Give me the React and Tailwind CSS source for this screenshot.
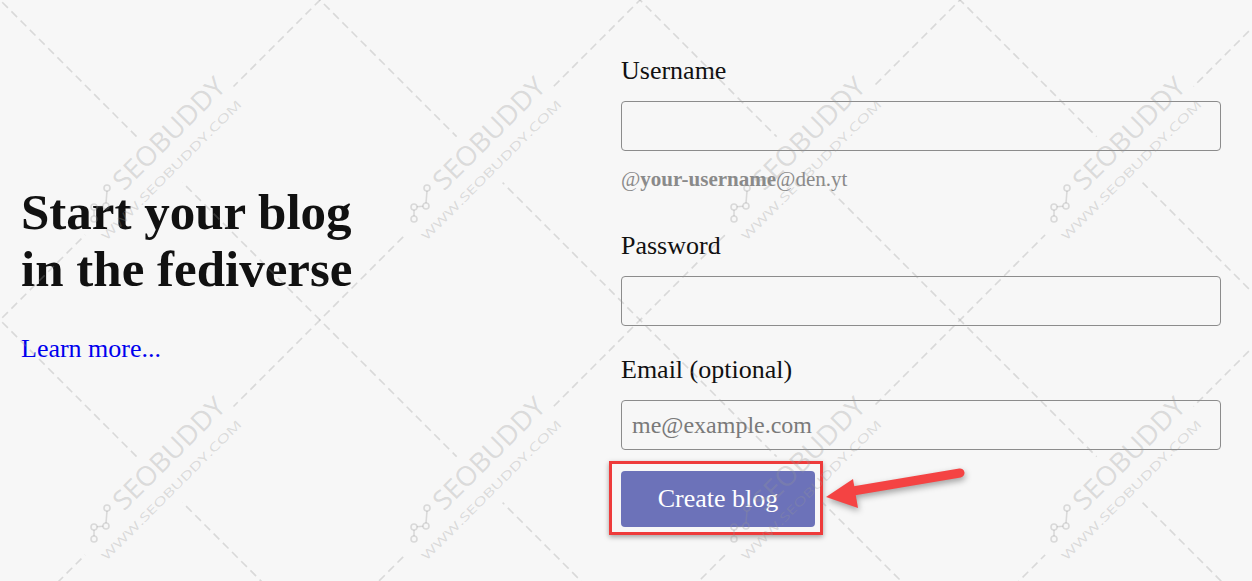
import React from "react";

const centers = [];
for (let i = 0; i < 4; i++) {
  for (let j = 0; j < 2; j++) {
    centers.push([160 + 320 * i, 160 + 320 * j]);
  }
}

function Watermark() {
  const negLines = [1, 2, 3, 4, 5];
  const posLines = [-4, -3, -2, -1, 0, 1];
  const c = "rgba(150,150,150,0.3)";
  return (
    <svg
      className="absolute inset-0 pointer-events-none"
      width="100%"
      height="100%"
    >
      <defs>
        <mask id="wm-mask">
          <rect x="-100" y="-100" width="1600" height="900" fill="white" />
          {centers.map(([cx, cy], k) => (
            <g key={k} transform={`translate(${cx} ${cy}) rotate(-45)`}>
              <rect x="-106" y="-33" width="210" height="65" fill="black" />
            </g>
          ))}
        </mask>
      </defs>
      <g
        mask="url(#wm-mask)"
        stroke={c}
        strokeWidth="1.6"
        strokeDasharray="8 5"
        fill="none"
      >
        {negLines.map((k) => (
          <line key={"n" + k} x1={-200} y1={320 * k + 200} x2={1500} y2={320 * k - 1500} />
        ))}
        {posLines.map((m) => (
          <line key={"p" + m} x1={-200} y1={-200 + 320 * m} x2={1500} y2={1500 + 320 * m} />
        ))}
      </g>
      {centers.map(([cx, cy], k) => (
        <g key={"t" + k}>
          <g transform={`translate(${cx} ${cy}) rotate(-45)`} fill={c}>
            <text
              x="-48"
              y="-3"
              fontSize="27"
              textLength="146"
              lengthAdjust="spacingAndGlyphs"
              style={{ fontFamily: "'Open Sans', sans-serif", fontWeight: 400 }}
            >
              SEOBUDDY
            </text>
            <text
              x="-95"
              y="19.5"
              fontSize="12"
              textLength="192"
              lengthAdjust="spacingAndGlyphs"
              style={{ fontFamily: "'Open Sans', sans-serif", fontWeight: 400 }}
            >
              WWW.SEOBUDDY.COM
            </text>
          </g>
          <g transform={`translate(${cx} ${cy})`} stroke={c} strokeWidth="1.6" fill="none">
            <circle cx="-53" cy="28" r="3" />
            <circle cx="-54" cy="46" r="3" />
            <circle cx="-66" cy="47" r="3" />
            <circle cx="-66" cy="59" r="3" />
            <line x1="-53" y1="31" x2="-54" y2="43" />
            <line x1="-57" y1="46.2" x2="-63" y2="46.8" />
            <line x1="-66" y1="50" x2="-66" y2="56" />
          </g>
        </g>
      ))}
    </svg>
  );
}

export default function App() {
  return (
    <div className="relative min-h-[581px] w-full overflow-hidden bg-[#f7f7f7] font-['Liberation_Serif',serif] text-[#111]">
      <div className="flex px-[21px]">
        <div className="w-[600px] pt-[184px]">
          <h1 className="text-[51px] leading-[57px] font-bold text-[#111]">
            Start your blog
            <br />
            in the fediverse
          </h1>
          <a
            href="#"
            className="mt-[36px] block text-[26px] leading-[30px] text-[#0000ee]"
          >
            Learn more...
          </a>
        </div>
        <form className="flex w-[600px] flex-col pt-[56px]" onSubmit={(e) => e.preventDefault()}>
          <label className="text-[26px] leading-[30px]">Username</label>
          <input
            type="text"
            className="mt-[15px] h-[50px] w-[600px] rounded-[4px] border border-[#8c8c8c] bg-transparent px-[10px] text-[24px] outline-none"
          />
          <p className="mt-[16px] text-[21px] leading-[24px] text-[#8a8a8a]">
            @<span className="font-bold">your-username</span>@den.yt
          </p>
          <label className="mt-[40px] text-[26px] leading-[30px]">Password</label>
          <input
            type="password"
            className="mt-[15px] h-[50px] w-[600px] rounded-[4px] border border-[#8c8c8c] bg-transparent px-[10px] text-[24px] outline-none"
          />
          <label className="mt-[29px] text-[26px] leading-[30px]">Email (optional)</label>
          <input
            type="email"
            placeholder="me@example.com"
            className="mt-[15px] h-[50px] w-[600px] rounded-[4px] border border-[#8c8c8c] bg-transparent px-[10px] text-[24px] outline-none placeholder:text-[#7a7a7a]"
          />
          <div className="relative mt-[21px] w-[194px]">
            <div className="pointer-events-none absolute left-[-12px] top-[-10px] h-[74px] w-[214px] border-[3px] border-[#ee3b3b] shadow-[0_2px_5px_rgba(0,0,0,0.35)]" />
            <button
              type="submit"
              className="relative flex h-[56px] w-[194px] items-center justify-center rounded-[4px] bg-[#6c72b9] text-[26px] leading-[30px] text-white"
            >
              Create blog
            </button>
          </div>
        </form>
      </div>

      <svg
        className="pointer-events-none absolute left-[815px] top-[460px] drop-shadow-[1px_3px_3px_rgba(0,0,0,0.35)]"
        width="160"
        height="60"
      >
        <line x1="38" y1="31" x2="145" y2="13" stroke="#f44343" strokeWidth="9" strokeLinecap="round" />
        <polygon points="11,37 38,19 43,48" fill="#f44343" />
      </svg>

      <Watermark />
    </div>
  );
}
